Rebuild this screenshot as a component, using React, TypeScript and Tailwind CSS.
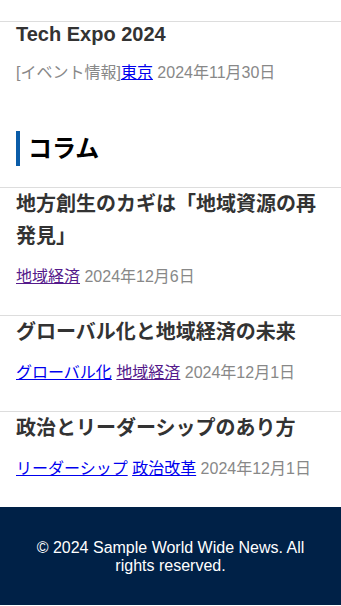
import React from 'react';

type Tag = { label: string; visited?: boolean };

interface Article {
  title: string;
  tags: Tag[];
  date: string;
}

const columns: Article[] = [
  {
    title: '地方創生のカギは「地域資源の再発見」',
    tags: [{ label: '地域経済', visited: true }],
    date: '2024年12月6日',
  },
  {
    title: 'グローバル化と地域経済の未来',
    tags: [{ label: 'グローバル化' }, { label: '地域経済', visited: true }],
    date: '2024年12月1日',
  },
  {
    title: '政治とリーダーシップのあり方',
    tags: [{ label: 'リーダーシップ' }, { label: '政治改革' }],
    date: '2024年12月1日',
  },
];

function TagLink({ tag }: { tag: Tag }) {
  return (
    <a href="#" className={tag.visited ? 'text-[#551a8b] underline' : 'text-[#0000ee] underline'}>
      {tag.label}
    </a>
  );
}

function ArticleItem({ article }: { article: Article }) {
  return (
    <li className="border-t border-[#dddddd] px-4 pb-[25px]">
      <h3 className="text-[20px] font-bold leading-[32px] text-[#333333]">{article.title}</h3>
      <p className="mt-3 text-[16px] leading-[26px] text-[#888888]">
        {article.tags.map((tag, i) => (
          <React.Fragment key={i}>
            <TagLink tag={tag} />{' '}
          </React.Fragment>
        ))}
        {article.date}
      </p>
    </li>
  );
}

export default function App() {
  return (
    <div
      className="bg-white pt-[21px]"
      style={{ fontFamily: '"Liberation Sans", "Noto Sans CJK JP", sans-serif' }}
    >
      {/* event list (tail) */}
      <ul>
        <li className="border-t border-[#dddddd] px-4 pb-[25px]">
          <h3 className="text-[20px] font-bold leading-[24px] text-[#333333]">Tech Expo 2024</h3>
          <p className="mt-[14px] text-[16px] leading-[26px] text-[#888888]">
            [イベント情報]<a href="#" className="text-[#0000ee] underline">東京</a> 2024年11月30日
          </p>
        </li>
      </ul>

      {/* column section */}
      <section>
        <h2 className="mx-4 mt-5 mb-[21px] border-l-4 border-[#0a5ca8] pl-2 text-[24px] font-bold leading-[35px] text-black">
          コラム
        </h2>
        <ul>
          {columns.map((a, i) => (
            <ArticleItem key={i} article={a} />
          ))}
        </ul>
      </section>

      <footer className="bg-[#002147] px-4 pt-8 pb-[30px] text-center text-[16px] leading-[18px] text-white">
        © 2024 Sample World Wide News. All rights reserved.
      </footer>
    </div>
  );
}
